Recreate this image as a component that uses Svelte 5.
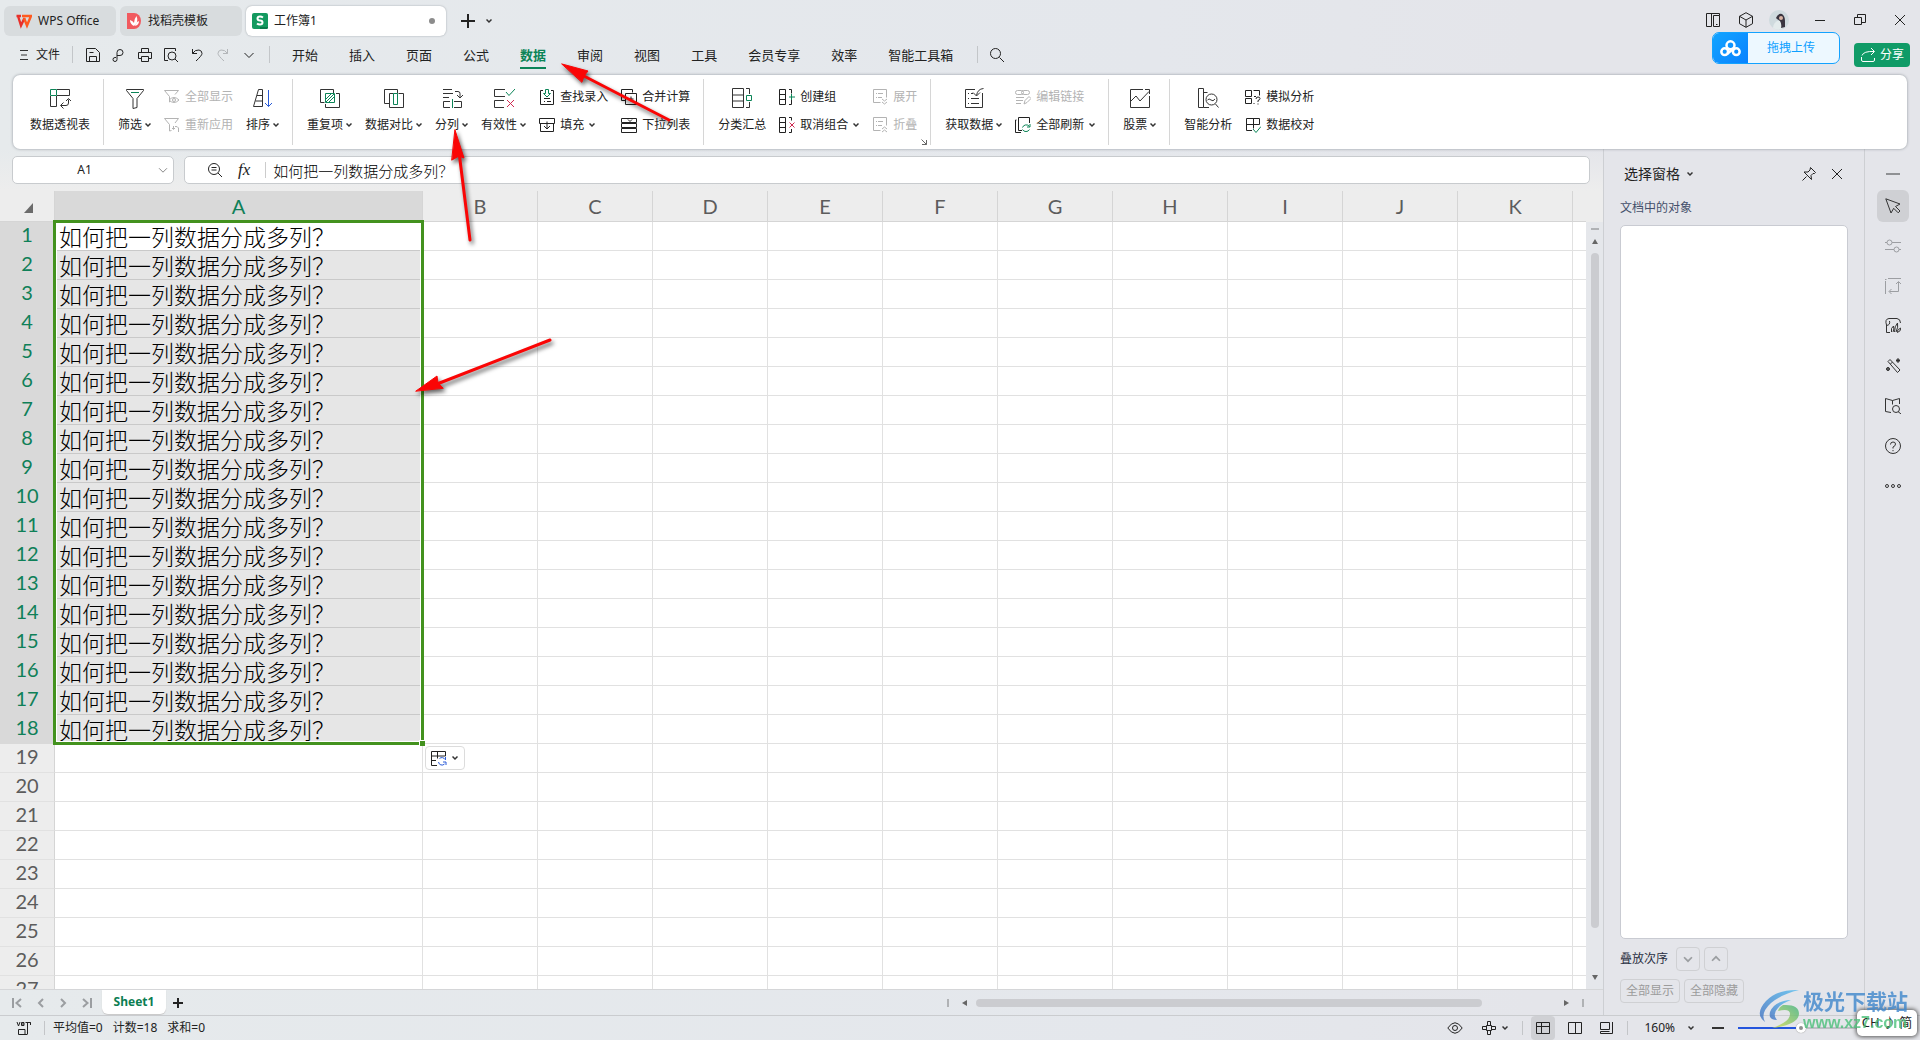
<script>
  const G = '#0b8457';
  const B = '#2a5bd7';
  const R = '#d0284f';

  // 22 x 22 artwork
  const big = {
    pivot: `<path d="M8 2.500h12.500v6H8M1.500 9v10.500h6V9M12 18.500h5q2.500 0 2.500-2.500v-3.500M17 14l2.500-2.500L22 14M14.500 15.500l-3 3 3 3"/><path stroke="${G}" d="M1.500 2.500h6v6h-6z"/>`,
    filter: `<path d="M2.500 2.500h17v1l-6.500 8v9l-4 1v-10l-6.500-8z"/><path stroke="${G}" d="M7 5.500h8"/>`,
    sort: `<path d="M6.500 2.500h4v17h-9zM5 8.500h5.500M3.500 14h7"/><path stroke="${B}" d="M16.500 3v16.500M13 16l3.500 3.500L20 16"/>`,
    dup: `<path d="M5.500 15.500h-4v-13h13v4M17 6.500h3.500v14h-14V17"/><path stroke="${G}" d="M6.500 6.500h9v9h-9zM7 12l5-5M7 15l8-8M10 15l5-5"/>`,
    compare: `<path d="M6.500 16.500h-5v-14h13v4M15.500 6.500h5v14h-14v-14h4"/><path stroke="${G}" d="M10.500 6.500h4v11h-4z"/>`,
    split: `<path d="M2 2.500h9M2 6.500h10M2 10.500h6M14 4.500h3q2 0 2 2v4M16 8l3 3 3-3M9 14.500H2.500v6H9M13 14.500h7.500v6H13"/><path stroke="${G}" d="M11.500 12v9"/>`,
    valid: `<path d="M12 2.500H1.500v7H12M11 13.500H1.500v7H11"/><path stroke="${G}" d="M13 5l3 3.500L22 2"/><path stroke="${R}" d="M14 13l7 7M21 13l-7 7"/>`,
    subtotal: `<path d="M1.500 1.500h11v19h-11zM1.500 8h11M1.500 14h11M15 1.500h3.500V7M18.500 15v5.500H15"/><path stroke="${G}" d="M15.500 8.500h5v5h-5z"/>`,
    getdata: `<path d="M12 2.500H2.500v18h17V6M20.500 1.500q-6 .5-7 7M10 5.500l3.500 3.500L17 5.500M5 6.500h1M8 6.500h2M5 11.500h1M8 11.500h8M5 16.500h1M8 16.500h8"/>`,
    stock: `<path d="M14 2.500H1.500v18h19V9M2 14l5-5 4 5 9-9.500M16 2.500h4.500V7"/>`,
    smart: `<path d="M1.500 1.500h5v19h-5zM6.500 5.500h4M6.500 20.500H12M18.500 17l3 3.500M10.500 13q1.500-2 3.500 0t4-1"/><circle cx="14.500" cy="12.500" r="5.500"/>`
  };

  // 16 x 16 artwork
  const small = {
    showall: `<path d="M6.500 12.500 5.500 13V7.500L.5 1.500h14L11 5.500M5 11q5-5 10 0-5 5-10 0z"/><circle cx="10" cy="11" r="1.500"/>`,
    reapply: `<path d="M7.500 13.500l-2 .500V7.500L.5 1.500h14L11 6M9.500 9v3M8 11l1.500 1.500L11 11M14.500 15V11q-1-2-3.500-1.500"/>`,
    lookup: `<path d="M4 1.500H1.500v14h13V1.500H12M5 12.500h1M8 12.500h4M5 9.500h6"/><path stroke="${G}" d="M6.500.500h3v4h2L8 8 4.500 4.500h2z"/>`,
    fill: `<path d="M.5 1.500h15v5H.5zM1.500 7v7.500h13V7M8 4.500V12M5 9l3 3 3-3"/>`,
    merge: `<path d="M4.500 11.500h-4v-11h11v3M4.500 4.500h11v11h-11zM10 7.500v5M7.500 10h5"/>`,
    dropdown: `<path d="M.5 1.500h15v4H.5zM.5 6.500h15v4H.5zM.5 11.500h15v4H.5zM7 2.500l2 2 2-2"/>`,
    group: `<path d="M.5.5h6v15h-6zM.5 5.500h6M.5 10.500h6M10 .5h2.500v4M12.500 11v4.500H10"/><path stroke="${G}" d="M12.500 5v6M10 8h6"/>`,
    ungroup: `<path d="M.5.5h6v15h-6zM.5 5.500h6M.5 10.500h6M10 .5h2.500v3M12.500 12v3.500H10"/><path stroke="${R}" d="M10.500 5.500l5 5M15.500 5.500l-5 5"/>`,
    expand: `<path d="M8.500 13.500h-7v-13h13v8M4 4.500h1M6 4.500h5M4 8.500h1M6 8.500h4M10 10l2.500 2L15 10M10 13l2.500 2 2.500-2"/>`,
    collapse: `<path d="M8.500 13.500h-7v-13h13v8M4 4.500h1M6 4.500h5M4 8.500h1M6 8.500h4M10 12l2.500-2 2.500 2M10 15l2.500-2 2.500 2"/>`,
    editlink: `<rect x=".5" y="1.500" width="8" height="4" rx="2"/><rect x="6.500" y="1.500" width="8" height="4" rx="2"/><path d="M1 8.500h8M1 11.500h7M1 14.500h5M9 15l1-3.500 4-4 2 2-4 4z"/>`,
    refresh: `<path d="M7 13.500H3.500V.5h11V6M1.500 3H.5v12.500H6"/><path stroke="${G}" d="M14.500 9.500a4 4 0 0 0-7 1M15 7v3h-3M7.500 12.500a4 4 0 0 0 7 0"/>`,
    whatif: `<path d="M.5 1.500h6v6h-6zM8.500 1.500h6v5M.5 9.500h6v5h-6zM8.500 14.500h1M9 7.500h2M11 10q0-2 2-2t2 1.500-2 2v1.500M13 14.500v1"/>`,
    proof: `<path d="M7 13.500H1.500v-12h13v6M1.500 7.500h13M8.500 1.500v10"/><path stroke="${G}" d="M8 12l3 3.500 5-6"/>`
  };

  // 16 x 16 artwork for bars and side rail
  const bar = {
    save: `<path d="M1.500 1.500h9l4 4v9h-13zM4.500 14.500v-5h7v5M4.500 5.500h4"/>`,
    export: `<path d="M5 10.500H4a2 2 0 1 0 2 2v-7a3 3 0 1 1 3 3H6"/>`,
    print: `<path d="M4.500 5V1.500h7V5M4 11.500H1.500v-6h13v6H12M4.500 9.500h7v5h-7z"/>`,
    preview: `<path d="M5 13.500H1.500v-12h11V4M12 12l3 3"/><circle cx="9" cy="9" r="4"/>`,
    undo: `<path d="M3.500 2v4.500H8M3.500 6.500Q6 2.500 10 3q3 .5 3 3.500 0 2-6 7.500"/>`,
    redo: `<path d="M12.500 2v4.500H8M12.500 6.500Q10 2.500 6 3 3 3.500 3 6.500q0 2 6 7.500"/>`,
    down: `<path d="M3.500 6 8 10.500 12.500 6"/>`,
    up: `<path d="M3.500 10 8 5.500 12.500 10"/>`,
    search: `<circle cx="6.500" cy="6.500" r="5"/><path d="M10.500 10.500l4.500 4.500"/>`,
    layout: `<path d="M6.500 14.500h-5v-13h13v2M6.500 1.500v13M8.500 3.500h6v11h-6zM11 12.500h1.500"/>`,
    cube: `<path d="M8 .7 14.500 4.300v7.400L8 15.300 1.500 11.700V4.300zM1.500 4.300 8 8l6.500-3.700M8 8v7.300"/>`,
    min: `<path d="M3 8.500h10"/>`,
    restore: `<path d="M2.500 5.500h7v7h-7zM5.500 5.500v-3h8v8h-4"/>`,
    close: `<path d="M3 3l10 10M13 3 3 13"/>`,
    share: `<path d="M1.500 10v3q0 1.500 1.500 1.500h10q1.500 0 1.500-1.500v-2M2 8.500q1.500-4.500 12-4M11 1l3.500 3.500L11 8"/>`,
    zoomout: `<circle cx="7" cy="7" r="5.500"/><path d="M11 11l4 4M4.500 5.500h5M4.500 8h5"/>`,
    pin: `<path d="M1.500 14.500l4-4M9.500 1.500l5 5-1 1-1.500 0-2 2 .5 4L3 6l4 0 2-2z"/>`,
    cursor: `<path d="M.8.8 15 6l-4.500 2.500 4.500 4.500-1.800 1.800L8.700 10.300 6 15z"/>`,
    tune: `<path d="M0 4.500h2M7 4.500h9M0 11.500h9M14 11.500h2"/><circle cx="4.500" cy="4.500" r="2.500"/><circle cx="11.500" cy="11.500" r="2.500"/>`,
    resize: `<path d="M3 .5h13M.5 3v13M0 1.500h1.500M13.500 4v9.500h-9M11 6l2.500-2.500L16 6M6.500 11 4 13.500 6.500 16"/>`,
    material: `<path d="M5 14.500H1.500V7Q-.5 1 4 .5h8Q15.500 1 15.500 5M4.500 3q1 4-3 4.500M6.500 14Q5.500 10 8.500 8q1 3-.5 6M9.500 14q0-6 3-9 1 4-1.500 9M12 14q.5-3 4-4-.5 4-4 4.500"/>`,
    wand: `<path d="M3 3.500l2-2L15 12l-2.500 2.500zM5.500 6l2-2"/><circle cx="13" cy="2.500" r="1.500"/><circle cx="3" cy="11" r="1.500"/><path d="M11 2.500h4M13 .5v4M1 11h4M3 9v4"/>`,
    book: `<path d="M6 14.500l-5.500-1V.5L7.500 2.500 14.500.5V6M7.500 2.500v4M13 13.500l3 2.500"/><circle cx="11" cy="11" r="3.500"/>`,
    help: `<circle cx="8" cy="8" r="7.500"/><path d="M5.500 6.500Q5.500 4 8 4t2.500 2T8 9v1.500M8 12v1.200"/>`,
    more: `<circle cx="2" cy="8" r="1.500"/><circle cx="8" cy="8" r="1.500"/><circle cx="14" cy="8" r="1.500"/>`,
    eye: `<path d="M.8 8Q8-2.500 15.200 8 8 18.500.8 8z"/><circle cx="8" cy="8" r="2.500"/>`,
    move: `<path d="M5.500 5.500h5v5h-5zM6.500 5.500v-4h3v4M6.500 10.500v4h3v-4M5.500 6.500h-4v3h4M10.500 6.500h4v3h-4"/>`,
    normal: `<path d="M1.500 2.500h13v11h-13zM1.500 6.500h13M6.500 2.500v11"/>`,
    pages: `<path d="M1.500 2.500h13v11h-13zM8.500 2.500v11"/>`,
    reading: `<path d="M1.500 2.500h9v7h-9zM13.500 2v11.500H1.500V11.500h9"/>`,
    macro: `<path d="M1 2l1.500 4L4 2M5.500 2.500H8v3H5.500zM5.500 4H8M11.500 14V2.500h3V5M9.500 2.500h5M11.500 14.500h-9v-5M2.500 9.500H9v5"/>`,
    first: `<path stroke-width="2" d="M2 3v10M10 4 5.500 8l4.500 4"/>`,
    prev: `<path stroke-width="2" d="M10 4 6 8l4 4"/>`,
    next: `<path stroke-width="2" d="M6 4l4 4-4 4"/>`,
    last: `<path stroke-width="2" d="M14 3v10M6 4l4.500 4L6 12"/>`,
    paste: `<path d="M6 15.500H.5v-14h14V6M.5 6h14M6.500 1.500v7M.5 10.500H5"/><path stroke="${B}" d="M8.500 8.500a3.500 3.500 0 0 1 5.500 1M14.500 7v3M7.500 12a3.500 3.500 0 0 0 6 2M15 15v-3h-3"/>`
  };

  const menus = ['开始', '插入', '页面', '公式', '数据', '审阅', '视图', '工具', '会员专享', '效率', '智能工具箱'];
  const quick = [
    ['save', '保存'], ['export', '输出'], ['print', '打印'], ['preview', '打印预览'],
    ['undo', '撤销'], ['redo', '恢复'], ['down', '更多']
  ];

  const groups = [
    [{ icon: 'pivot', label: '数据透视表' }],
    [
      { icon: 'filter', label: '筛选', menu: true },
      { pair: [{ icon: 'showall', label: '全部显示', off: true }, { icon: 'reapply', label: '重新应用', off: true }] },
      { icon: 'sort', label: '排序', menu: true }
    ],
    [
      { icon: 'dup', label: '重复项', menu: true },
      { icon: 'compare', label: '数据对比', menu: true },
      { icon: 'split', label: '分列', menu: true },
      { icon: 'valid', label: '有效性', menu: true },
      { pair: [{ icon: 'lookup', label: '查找录入' }, { icon: 'fill', label: '填充', menu: true }] },
      { pair: [{ icon: 'merge', label: '合并计算' }, { icon: 'dropdown', label: '下拉列表' }] }
    ],
    [
      { icon: 'subtotal', label: '分类汇总' },
      { pair: [{ icon: 'group', label: '创建组' }, { icon: 'ungroup', label: '取消组合', menu: true }] },
      { pair: [{ icon: 'expand', label: '展开', off: true }, { icon: 'collapse', label: '折叠', off: true }], corner: true }
    ],
    [
      { icon: 'getdata', label: '获取数据', menu: true },
      { pair: [{ icon: 'editlink', label: '编辑链接', off: true }, { icon: 'refresh', label: '全部刷新', menu: true }] }
    ],
    [{ icon: 'stock', label: '股票', menu: true }],
    [
      { icon: 'smart', label: '智能分析' },
      { pair: [{ icon: 'whatif', label: '模拟分析' }, { icon: 'proof', label: '数据校对' }] }
    ]
  ];

  const columns = 'ABCDEFGHIJK'.split('');
  const rows = Array.from({ length: 27 }, (_, i) => i + 1);
  const filled = 18;
  const cellText = '如何把一列数据分成多列？';
  const rail = [
    ['cursor', '选择', 'on'], ['tune', '属性', 'dim'], ['resize', '大小', 'dim'], ['material', '素材', ''],
    ['wand', '工具', ''], ['book', '查找', ''], ['help', '帮助', ''], ['more', '更多', '']
  ];

  let name = $state('A1');
  let formula = $state(cellText);
  let zoom = $state(50);
</script>

{#snippet ico(name)}
  <svg class="ico" viewBox="0 0 16 16" aria-hidden="true">{@html bar[name]}</svg>
{/snippet}

{#snippet caret()}
  <svg class="caret" viewBox="0 0 6 6" aria-hidden="true"><path d="M.5 1.500 3 4l2.500-2.500" /></svg>
{/snippet}

<div class="app">
  <header>
    <div class="titlebar">
      <button class="tab home">
        <svg class="logo" viewBox="0 0 16 16" aria-hidden="true">
          <path fill="none" stroke="#e8302a" stroke-width="2.400" d="M.5 3h4.500M2 3l3 9.500L8.500 5" />
          <path fill="none" stroke="#ff5a1f" stroke-width="2.400" d="M6 3h9l-4 9.500L8 5" />
        </svg>
        WPS Office
      </button>
      <button class="tab docer">
        <svg class="logo" viewBox="0 0 16 16" aria-hidden="true">
          <path fill="#f15a5f" d="M1 0h7a7 8 0 0 1 0 16H1z" />
          <path fill="#fff" d="M8 13Q4 11 4 7q3 1 4 3 0-4 2.500-7Q13 9 8 13zM9 13q4-1 4-5-3 1-4 5z" />
        </svg>
        找稻壳模板
      </button>
      <button class="tab current">
        <svg class="logo" viewBox="0 0 16 16" aria-hidden="true">
          <rect width="16" height="16" rx="2" fill="#13995f" />
          <path fill="#0b7a4a" d="M8 14h8v1l-1 1H8z" />
          <path fill="none" stroke="#fff" stroke-width="2" d="M11 4.500Q9.500 3.500 8 3.500q-2.500 0-2.500 2t2.500 2 2.500 2-2.500 2q-1.800 0-3-1" />
        </svg>
        工作簿1
        <span class="dot"></span>
      </button>
      <button class="plain plus" aria-label="新建">
        <svg class="ico" viewBox="0 0 16 16"><path stroke-width="2" d="M1 8h14M8 1v14" /></svg>
      </button>
      <button class="plain" aria-label="标签列表">{@render caret()}</button>
      <div class="window">
        <button class="plain" aria-label="布局">{@render ico('layout')}</button>
        <button class="plain" aria-label="应用">{@render ico('cube')}</button>
        <button class="plain account" aria-label="账号">
          <svg class="avatar" viewBox="0 0 20 20">
            <circle cx="10" cy="10" r="10" fill="#cfdade" />
            <path fill="#e3ebec" d="M4 18q0-6 7-8l2 9q-5 2-9-1z" />
            <path fill="#3a3540" d="M7 8q2-5 6-4 3 2 3 7l0 6-4 1q1-4-1-7l-3-2z" />
            <circle cx="12" cy="8" r="2" fill="#d9b5a6" />
          </svg>
        </button>
        <button class="plain wide" aria-label="最小化">{@render ico('min')}</button>
        <button class="plain wide" aria-label="还原">{@render ico('restore')}</button>
        <button class="plain wide" aria-label="关闭">{@render ico('close')}</button>
      </div>
    </div>

    <nav class="menubar">
      <button class="plain file">
        <svg class="burger" viewBox="0 0 8 12" aria-hidden="true"><path d="M0 1.500h8M1 6h6M0 10.500h8" /></svg>
        文件
      </button>
      <span class="sep"></span>
      {#each quick as [icon, label]}
        <button class="plain quick" class:faded={icon === 'redo'} aria-label={label}>{@render ico(icon)}</button>
      {/each}
      <span class="sep second"></span>
      <div class="menus">
        {#each menus as m}
          <button class="plain menu" class:active={m === '数据'}>{m}</button>
        {/each}
      </div>
      <span class="sep"></span>
      <button class="plain find" aria-label="搜索">{@render ico('search')}</button>
      <button class="share">{@render ico('share')}分享</button>
    </nav>
    <button class="upload">
      <span class="cloud">
        <svg viewBox="0 0 20 16" aria-hidden="true">
          <circle cx="10" cy="5" r="3.800" /><circle cx="4.500" cy="11" r="3.200" /><circle cx="15.500" cy="11" r="3.200" />
          <path d="M7 13l6-5" />
        </svg>
      </span>
      <span class="uptext">拖拽上传</span>
    </button>
  </header>

  <section class="ribbon" aria-label="数据">
    {#each groups as g, i}
      {#if i > 0}<span class="divider"></span>{/if}
      {#each g as item}
        {#if item.pair}
          <div class="pair">
            {#each item.pair as p}
              <button class="plain smallbtn" disabled={p.off}>
                <svg class="ico" viewBox="0 0 16 16" aria-hidden="true">{@html small[p.icon]}</svg>
                {p.label}
                {#if p.menu}{@render caret()}{/if}
              </button>
            {/each}
            {#if item.corner}
              <svg class="corner" viewBox="0 0 6 6" aria-hidden="true"><path d="M.5.500l5 5M5.500 1v4.500H1" /></svg>
            {/if}
          </div>
        {:else}
          <button class="plain bigbtn">
            <svg class="bigico" viewBox="0 0 22 22" aria-hidden="true">{@html big[item.icon]}</svg>
            <span class="biglabel">{item.label}{#if item.menu}{@render caret()}{/if}</span>
          </button>
        {/if}
      {/each}
    {/each}
  </section>

  <div class="body">
    <main>
      <div class="formulabar">
        <div class="namebox">
          <input aria-label="名称框" bind:value={name} />
          <button class="plain" aria-label="名称列表">{@render ico('down')}</button>
        </div>
        <div class="fxbox">
          <button class="plain" aria-label="缩小">{@render ico('zoomout')}</button>
          <button class="plain fx" aria-label="插入函数"><i>fx</i></button>
          <span class="fxsep"></span>
          <input aria-label="编辑栏" bind:value={formula} />
        </div>
      </div>

      <div class="gridrow">
        <div class="sheet">
          <table>
            <colgroup>
              <col class="c-head" /><col class="c-a" />
              {#each columns.slice(1) as c}<col class="c-std" />{/each}
              <col />
            </colgroup>
            <thead>
              <tr>
                <th class="cornercell"><svg viewBox="0 0 9 10" aria-hidden="true"><path d="M9 0v10H0z" /></svg></th>
                {#each columns as c}<th class:sel={c === 'A'}>{c}</th>{/each}
                <th></th>
              </tr>
            </thead>
            <tbody>
              {#each rows as r}
                <tr class:picked={r <= filled} class:lead={r === 1}>
                  <th scope="row">{r}</th>
                  <td class="first">{r <= filled ? cellText : ''}</td>
                  {#each columns.slice(1) as c}<td></td>{/each}
                  <td></td>
                </tr>
              {/each}
            </tbody>
          </table>
          <div class="selection"><span class="handle"></span></div>
          <button class="paste" aria-label="粘贴选项">{@render ico('paste')}{@render caret()}</button>
        </div>
        <div class="vscroll">
          <span class="vmark"></span>
          <svg class="tri" viewBox="0 0 6 5" aria-hidden="true"><path d="M3 0l3 5H0z" /></svg>
          <span class="vthumb"></span>
          <svg class="tri" viewBox="0 0 6 5" aria-hidden="true"><path d="M0 0h6L3 5z" /></svg>
        </div>
      </div>

      <div class="sheetbar">
        <div class="sheetnav">
          <button class="plain" aria-label="第一张">{@render ico('first')}</button>
          <button class="plain" aria-label="上一张">{@render ico('prev')}</button>
          <button class="plain" aria-label="下一张">{@render ico('next')}</button>
          <button class="plain" aria-label="最后一张">{@render ico('last')}</button>
        </div>
        <button class="sheettab">Sheet1</button>
        <button class="plain addsheet" aria-label="新建工作表">
          <svg class="ico" viewBox="0 0 16 16"><path stroke-width="2" d="M3 8h10M8 3v10" /></svg>
        </button>
        <div class="hscroll">
          <span class="hmark"></span>
          <svg class="tri side" viewBox="0 0 5 6" aria-hidden="true"><path d="M5 0v6L0 3z" /></svg>
          <span class="htrack"><span class="hthumb"></span></span>
          <svg class="tri side" viewBox="0 0 5 6" aria-hidden="true"><path d="M0 0l5 3-5 3z" /></svg>
          <span class="hmark"></span>
        </div>
      </div>
    </main>

    <aside class="pane">
      <div class="panehead">
        <h2>选择窗格</h2>
        {@render caret()}
        <button class="plain pin" aria-label="固定">{@render ico('pin')}</button>
        <button class="plain" aria-label="关闭窗格">{@render ico('close')}</button>
      </div>
      <p>文档中的对象</p>
      <div class="objects"></div>
      <div class="order">
        叠放次序
        <button aria-label="下移">{@render ico('down')}</button>
        <button aria-label="上移">{@render ico('up')}</button>
      </div>
      <div class="showhide">
        <button disabled>全部显示</button>
        <button disabled>全部隐藏</button>
      </div>
    </aside>

    <aside class="rail">
      <span class="grip"></span>
      {#each rail as [icon, label, state]}
        <button class="plain railbtn {state}" aria-label={label}>{@render ico(icon)}</button>
      {/each}
    </aside>
  </div>

  <footer>
    <button class="plain" aria-label="宏">{@render ico('macro')}</button>
    <span class="fsep"></span>
    <span class="stats"><span>平均值=0</span><span>计数=18</span><span>求和=0</span></span>
    <div class="views">
      <button class="plain" aria-label="护眼">{@render ico('eye')}</button>
      <button class="plain cross" aria-label="阅读模式">{@render ico('move')}{@render caret()}</button>
      <span class="fsep"></span>
      <button class="plain view on" aria-label="普通视图">{@render ico('normal')}</button>
      <button class="plain view" aria-label="分页预览">{@render ico('pages')}</button>
      <button class="plain view" aria-label="阅读版式">{@render ico('reading')}</button>
      <span class="fsep"></span>
      <button class="plain percent">160%{@render caret()}</button>
      <button class="plain minus" aria-label="缩小比例"><span></span></button>
      <input type="range" aria-label="缩放" min="0" max="100" bind:value={zoom} />
    </div>
  </footer>

  <div class="ime">CH ♪ 简</div>
  <div class="brand">
    <svg viewBox="0 0 44 42" aria-hidden="true">
      <defs>
        <linearGradient id="bl" x1="0" y1="1" x2="1" y2="0"><stop offset="0" stop-color="#3e6fc0" /><stop offset="1" stop-color="#55bdf0" /></linearGradient>
        <linearGradient id="gr" x1="0" y1="1" x2="1" y2="0"><stop offset="0" stop-color="#d6dc4e" /><stop offset="1" stop-color="#3fb37e" /></linearGradient>
      </defs>
      <path fill="url(#bl)" d="M41 1Q20 0 8 12-4 25 7 33 2 24 13 14 24 5 41 1z" />
      <path fill="url(#bl)" d="M33 11Q16 12 12 23q-2 8 7 8-5-6 1-12 4-5 13-8z" />
      <path fill="url(#gr)" d="M25 16q16-1 16 9-1 11-27 14 18-6 18-14 0-6-12-3 1-4 5-6z" />
    </svg>
    <div class="brandtext"><strong>极光下载站</strong><em>www.xz7.com</em></div>
  </div>

  <svg class="arrows" viewBox="0 0 700 420" aria-hidden="true">
    <path d="M669 120 582 75" /><path class="tip" d="M562 64l26 7-4 5 -2 6z" />
    <path d="M470 240 459 152" /><path class="tip" d="M455 130l9 28-5-2-7 4z" />
    <path d="M550 340 437 384" /><path class="tip" d="M416 391l21-15 1 7 5 5z" />
  </svg>
</div>

<style>
  :global(body) { margin: 0; }
  .app {
    position: relative;
    display: flex;
    flex-direction: column;
    height: 100vh;
    overflow: hidden;
    background: linear-gradient(90deg, #e6eaec, #e4e7ec 60%, #e4e5ea 80%);
    color: #222;
    font: 12px/18px "Noto Sans", "Noto Sans CJK SC", sans-serif;
  }
  button, input { font: inherit; color: inherit; }
  button { cursor: default; white-space: nowrap; }
  .plain {
    display: flex;
    align-items: center;
    justify-content: center;
    padding: 0;
    border: 0;
    background: none;
  }
  svg { flex: none; }
  .ico { display: block; width: 16px; height: 16px; fill: none; stroke: currentColor; stroke-width: 1; }
  .caret { display: block; width: 6px; height: 6px; fill: none; stroke: #333; stroke-width: 1.500; }

  header { position: relative; flex: none; }
  .titlebar { display: flex; align-items: center; gap: 4px; height: 30px; padding: 6px 0 0 4px; }
  .tab {
    display: flex;
    align-items: center;
    gap: 6px;
    height: 30px;
    padding: 0 12px;
    border: 0;
    border-radius: 6px;
    background: #d8dcde;
  }
  .logo { width: 16px; height: 16px; }
  .home { width: 112px; }
  .docer { width: 122px; padding: 0 6px; }
  .current { width: 200px; padding: 0 11px 0 6px; background: #fff; box-shadow: 0 0 2px #9aa0a6; }
  .dot { width: 6px; height: 6px; margin-left: auto; border-radius: 50%; background: #8c8c8c; }
  .plus { width: 28px; margin-left: 4px; }
  .window { display: flex; align-items: center; height: 28px; margin: 0 0 2px auto; }
  .window .plain { width: 33px; }
  .window .wide { width: 40px; }
  .window .account { margin-right: 5px; }
  .avatar { width: 20px; height: 20px; }

  .menubar { display: flex; align-items: center; height: 37px; padding: 0 10px 2px 20px; }
  .file { gap: 8px; }
  .burger { width: 8px; height: 12px; fill: none; stroke: #333; }
  .sep { width: 1px; height: 17px; margin: 0 7px 0 12px; background: #c3c6c9; }
  .second { margin: 0 22px 0 7px; }
  .quick { width: 26px; }
  .faded { color: #b3b6b9; }
  .menus { display: flex; gap: 31px; margin-right: 12px; font-size: 13px; }
  .menu { height: 28px; border-bottom: 2px solid transparent; border-top: 2px solid transparent; }
  .active { color: #0b8457; font-weight: 700; border-bottom-color: #0b8457; }
  .find { margin-left: 4px; }
  .share {
    display: flex;
    align-items: center;
    gap: 4px;
    height: 24px;
    margin-left: auto;
    padding: 0 6px;
    border: 0;
    border-radius: 4px;
    background: #109b67;
    color: #fff;
  }
  .upload {
    position: absolute;
    top: 32px;
    right: 80px;
    display: flex;
    width: 128px;
    height: 32px;
    padding: 0;
    border: 1px solid #13a2ff;
    border-radius: 7px;
    overflow: hidden;
    background: #edf8ff;
    color: #0ea0ff;
  }
  .cloud { display: grid; place-items: center; width: 35px; height: 30px; background: linear-gradient(135deg, #12a4ff, #0a82ff); }
  .cloud svg { width: 21px; height: 17px; fill: none; stroke: #fff; stroke-width: 2.400; }
  .uptext { flex: 1; padding-right: 5px; line-height: 30px; }

  .ribbon {
    display: flex;
    flex: none;
    gap: 13px;
    box-sizing: border-box;
    height: 74px;
    margin: 0 13px;
    padding: 12px 17px 0;
    border-radius: 7px;
    background: #fff;
    box-shadow: 0 0 3px #8f959c;
    z-index: 1;
  }
  .divider { width: 1px; height: 66px; margin: -8px 1px 0 0; background: #d6d6d6; }
  .bigbtn { flex-direction: column; justify-content: flex-start; gap: 7px; }
  .bigico { width: 22px; height: 22px; fill: none; stroke: #333; }
  .biglabel { display: flex; align-items: center; gap: 3px; }
  .pair { position: relative; display: flex; flex-direction: column; gap: 10px; padding-top: 1px; }
  .smallbtn { justify-content: flex-start; gap: 5px; height: 18px; }
  .smallbtn:disabled { color: #b3b3b3; }
  .corner { position: absolute; right: -10px; top: 52px; width: 6px; height: 6px; fill: none; stroke: #666; }

  .body { display: flex; flex: 1; min-height: 0; }
  main { display: flex; flex: 1; flex-direction: column; min-width: 0; }
  .formulabar {
    display: flex;
    gap: 10px;
    height: 28px;
    padding: 7px 13px 7px 12px;
    background: linear-gradient(rgba(237, 237, 237, 0), #ededed);
  }
  .namebox, .fxbox {
    display: flex;
    align-items: center;
    box-sizing: border-box;
    border: 1px solid #c8cbce;
    border-radius: 5px;
    background: #fff;
  }
  .namebox { width: 162px; padding-right: 3px; }
  .formulabar input { min-width: 0; flex: 1; padding: 0; border: 0; outline: 0; background: none; }
  .namebox input { text-align: center; }
  .namebox .ico { width: 14px; height: 14px; stroke: #777; }
  .fxbox { flex: 1; gap: 15px; padding-left: 22px; }
  .fx { font: 17px/24px "Liberation Serif", serif; }
  .fxsep { width: 1px; height: 16px; background: #ccc; margin-right: -8px; }
  .fxbox input { height: 24px; color: #000; font: 300 15px/18px "Liberation Sans", "Noto Sans CJK SC", sans-serif; }

  .gridrow { display: flex; flex: 1; min-height: 0; background: #ededed; }
  .sheet { position: relative; flex: 1; min-width: 0; overflow: hidden; background: #fff; }
  table { width: 100%; table-layout: fixed; border-collapse: separate; border-spacing: 0; }
  .c-head { width: 55px; }
  .c-a { width: 368px; }
  .c-std { width: 115px; }
  th, td { box-sizing: border-box; padding: 0; border-right: 1px solid #e1e1e1; border-bottom: 1px solid #e1e1e1; white-space: nowrap; }
  th { border-color: #d5d5d5; background: #ededed; color: #5c5c5c; font: 400 20px/24px Lato, sans-serif; }
  thead th { height: 31px; }
  th:last-child, td:last-child { border-right: 0; }
  th.sel { background: #d9d9d9; color: #0f8058; }
  .cornercell svg { display: block; width: 9px; height: 10px; margin: 3px 0 0 24px; fill: #6b6b6b; }
  tbody th, td { height: 29px; }
  tbody th { vertical-align: top; border-bottom-color: #e1e1e1; }
  .picked th { background: #d9d9d9; border-color: #d9d9d9; color: #0f8058; }
  .first { padding: 4px 0 0 4px; color: #000; font: 300 23px/24px "Liberation Sans", "Noto Sans CJK SC", sans-serif; }
  .picked .first { background: #e6e6e6; border-bottom-color: #c9c9c9; }
  .lead .first { background: #fff; }
  .selection {
    position: absolute;
    left: 53px;
    top: 29px;
    width: 365px;
    height: 519px;
    border: 3px solid #43921e;
    box-shadow: inset 0 0 0 1px #fff;
  }
  .handle { position: absolute; right: -4px; bottom: -4px; width: 5px; height: 5px; border: 1px solid #fff; border-width: 1px 0 0 1px; background: #43921e; }
  .paste {
    position: absolute;
    left: 425px;
    top: 555px;
    display: flex;
    align-items: center;
    gap: 5px;
    box-sizing: border-box;
    width: 40px;
    height: 24px;
    padding: 0 5px;
    border: 1px solid #dcdcdc;
    border-radius: 4px;
    background: #fff;
  }
  .vscroll { display: flex; flex-direction: column; align-items: center; width: 17px; margin-top: 31px; padding-bottom: 9px; background: #e5e7eb; }
  .vmark { width: 8px; height: 2px; margin: 6px 0 9px; background: #b0b2b5; }
  .tri { width: 6px; height: 5px; fill: #666; }
  .side { width: 5px; height: 6px; }
  .vthumb { width: 8px; flex: 1; margin: 9px 0 47px; border-radius: 4px; background: #cbccd0; }

  .sheetbar { display: flex; height: 25px; border-top: 1px solid #d5d6d8; }
  .sheetnav { display: flex; align-items: center; gap: 6px; padding: 0 9px 0 11px; color: #9b9ea1; }
  .sheettab { width: 64px; height: 24px; padding: 0; border: 0; border-radius: 0 0 6px 6px; background: #fff; color: #0b7d52; font-weight: 700; box-shadow: 0 1px 1px #c8c8c8; }
  .addsheet { margin: 0 0 0 4px; }
  .hscroll { display: flex; align-items: center; width: 637px; margin-left: auto; padding-right: 19px; gap: 13px; }
  .hmark { width: 2px; height: 8px; background: #b0b2b5; }
  .htrack { flex: 1; margin-left: -4px; }
  .hthumb { display: block; width: 88%; height: 8px; border-radius: 4px; background: #cbccd0; }

  .pane { display: flex; flex-direction: column; box-sizing: border-box; width: 262px; padding: 14px 16px 12px; border-left: 1px solid #cdcfd3; border-right: 1px solid #cdcfd3; }
  .panehead { display: flex; align-items: center; gap: 7px; height: 22px; padding: 0 3px 0 4px; }
  h2 { margin: 0; font-size: 14px; font-weight: 400; line-height: 22px; }
  .pin { margin-left: auto; margin-right: 5px; }
  .pane p { margin: 14px 0 8px; color: #44506b; }
  .objects { flex: 1; border: 1px solid #c9cbd2; border-radius: 5px; background: #fff; }
  .order { display: flex; align-items: center; gap: 4px; margin: 8px 0; color: #2a3042; }
  .order button { display: grid; place-items: center; width: 24px; height: 24px; padding: 0; border: 1px solid #cfd0d3; border-radius: 4px; background: none; color: #9b9ea1; }
  .order button:first-of-type { margin-left: 4px; }
  .order .ico { width: 14px; height: 14px; stroke-width: 2; }
  .showhide { display: flex; gap: 4px; }
  .showhide button { height: 24px; padding: 0 5px; border: 1px solid #cfd0d3; border-radius: 4px; background: none; color: #9b9b9b; }

  .rail { display: flex; flex-direction: column; align-items: center; gap: 8px; width: 55px; padding-top: 24px; color: #333; }
  .grip { width: 14px; height: 2px; margin-bottom: 7px; background: #8f9194; }
  .railbtn { width: 32px; height: 32px; border-radius: 6px; }
  .railbtn.on { background: #cfd0d4; }
  .railbtn.dim { color: #9c9ea2; }

  footer { display: flex; flex: none; align-items: center; height: 24px; padding-left: 16px; border-top: 1px solid #cacccf; }
  .fsep { width: 1px; height: 14px; margin: 0 8px 0 12px; background: #c3c5c8; }
  .stats { display: flex; gap: 10px; }
  .views { display: flex; align-items: center; margin-left: auto; padding-right: 57px; }
  .cross { gap: 5px; margin-left: 18px; }
  .views .fsep { margin: 0 8px 0 14px; }
  .view { width: 24px; height: 24px; margin-right: 8px; border-radius: 4px; }
  .views .view + .fsep { margin: 0 16px 0 0; }
  .on.view { background: #cfd0d4; }
  .percent { gap: 13px; }
  .minus { width: 12px; margin: 0 14px 0 18px; }
  .minus span { width: 12px; height: 2px; background: #333; }
  input[type='range'] { width: 125px; height: 12px; margin: 0; appearance: none; background: linear-gradient(90deg, #2455dd 50%, #bdbfc4 50%) center / 100% 2px no-repeat; }
  input[type='range']::-webkit-slider-thumb { appearance: none; width: 10px; height: 10px; border: 3px solid #fff; border-radius: 50%; background: #8f8f8f; box-sizing: border-box; box-shadow: 0 0 1px #777; }

  .ime {
    position: absolute;
    right: 3px;
    bottom: 4px;
    width: 60px;
    height: 26px;
    border-radius: 5px;
    background: #fff;
    box-shadow: 0 0 4px 1px #555;
    color: #222;
    font-size: 13px;
    line-height: 25px;
    text-align: center;
  }
  .brand { position: absolute; right: 10px; bottom: 8px; display: flex; gap: 1px; opacity: 0.8; pointer-events: none; }
  .brand svg { width: 44px; height: 42px; }
  .brandtext { display: flex; flex-direction: column; width: 107px; white-space: nowrap; }
  .brand strong { color: #3f87cc; font-size: 21px; line-height: 25px; }
  .brand em { color: #4cc07a; font: 700 16px/18px "Liberation Sans", sans-serif; }

  .arrows { position: absolute; left: 0; top: 0; z-index: 2; width: 700px; height: 420px; fill: none; stroke: #fa0505; stroke-width: 3; stroke-linecap: round; pointer-events: none; filter: drop-shadow(2px 3px 2px rgba(0, 0, 0, 0.6)); }
  .arrows .tip { fill: #fa0505; stroke-width: 1; }
</style>
